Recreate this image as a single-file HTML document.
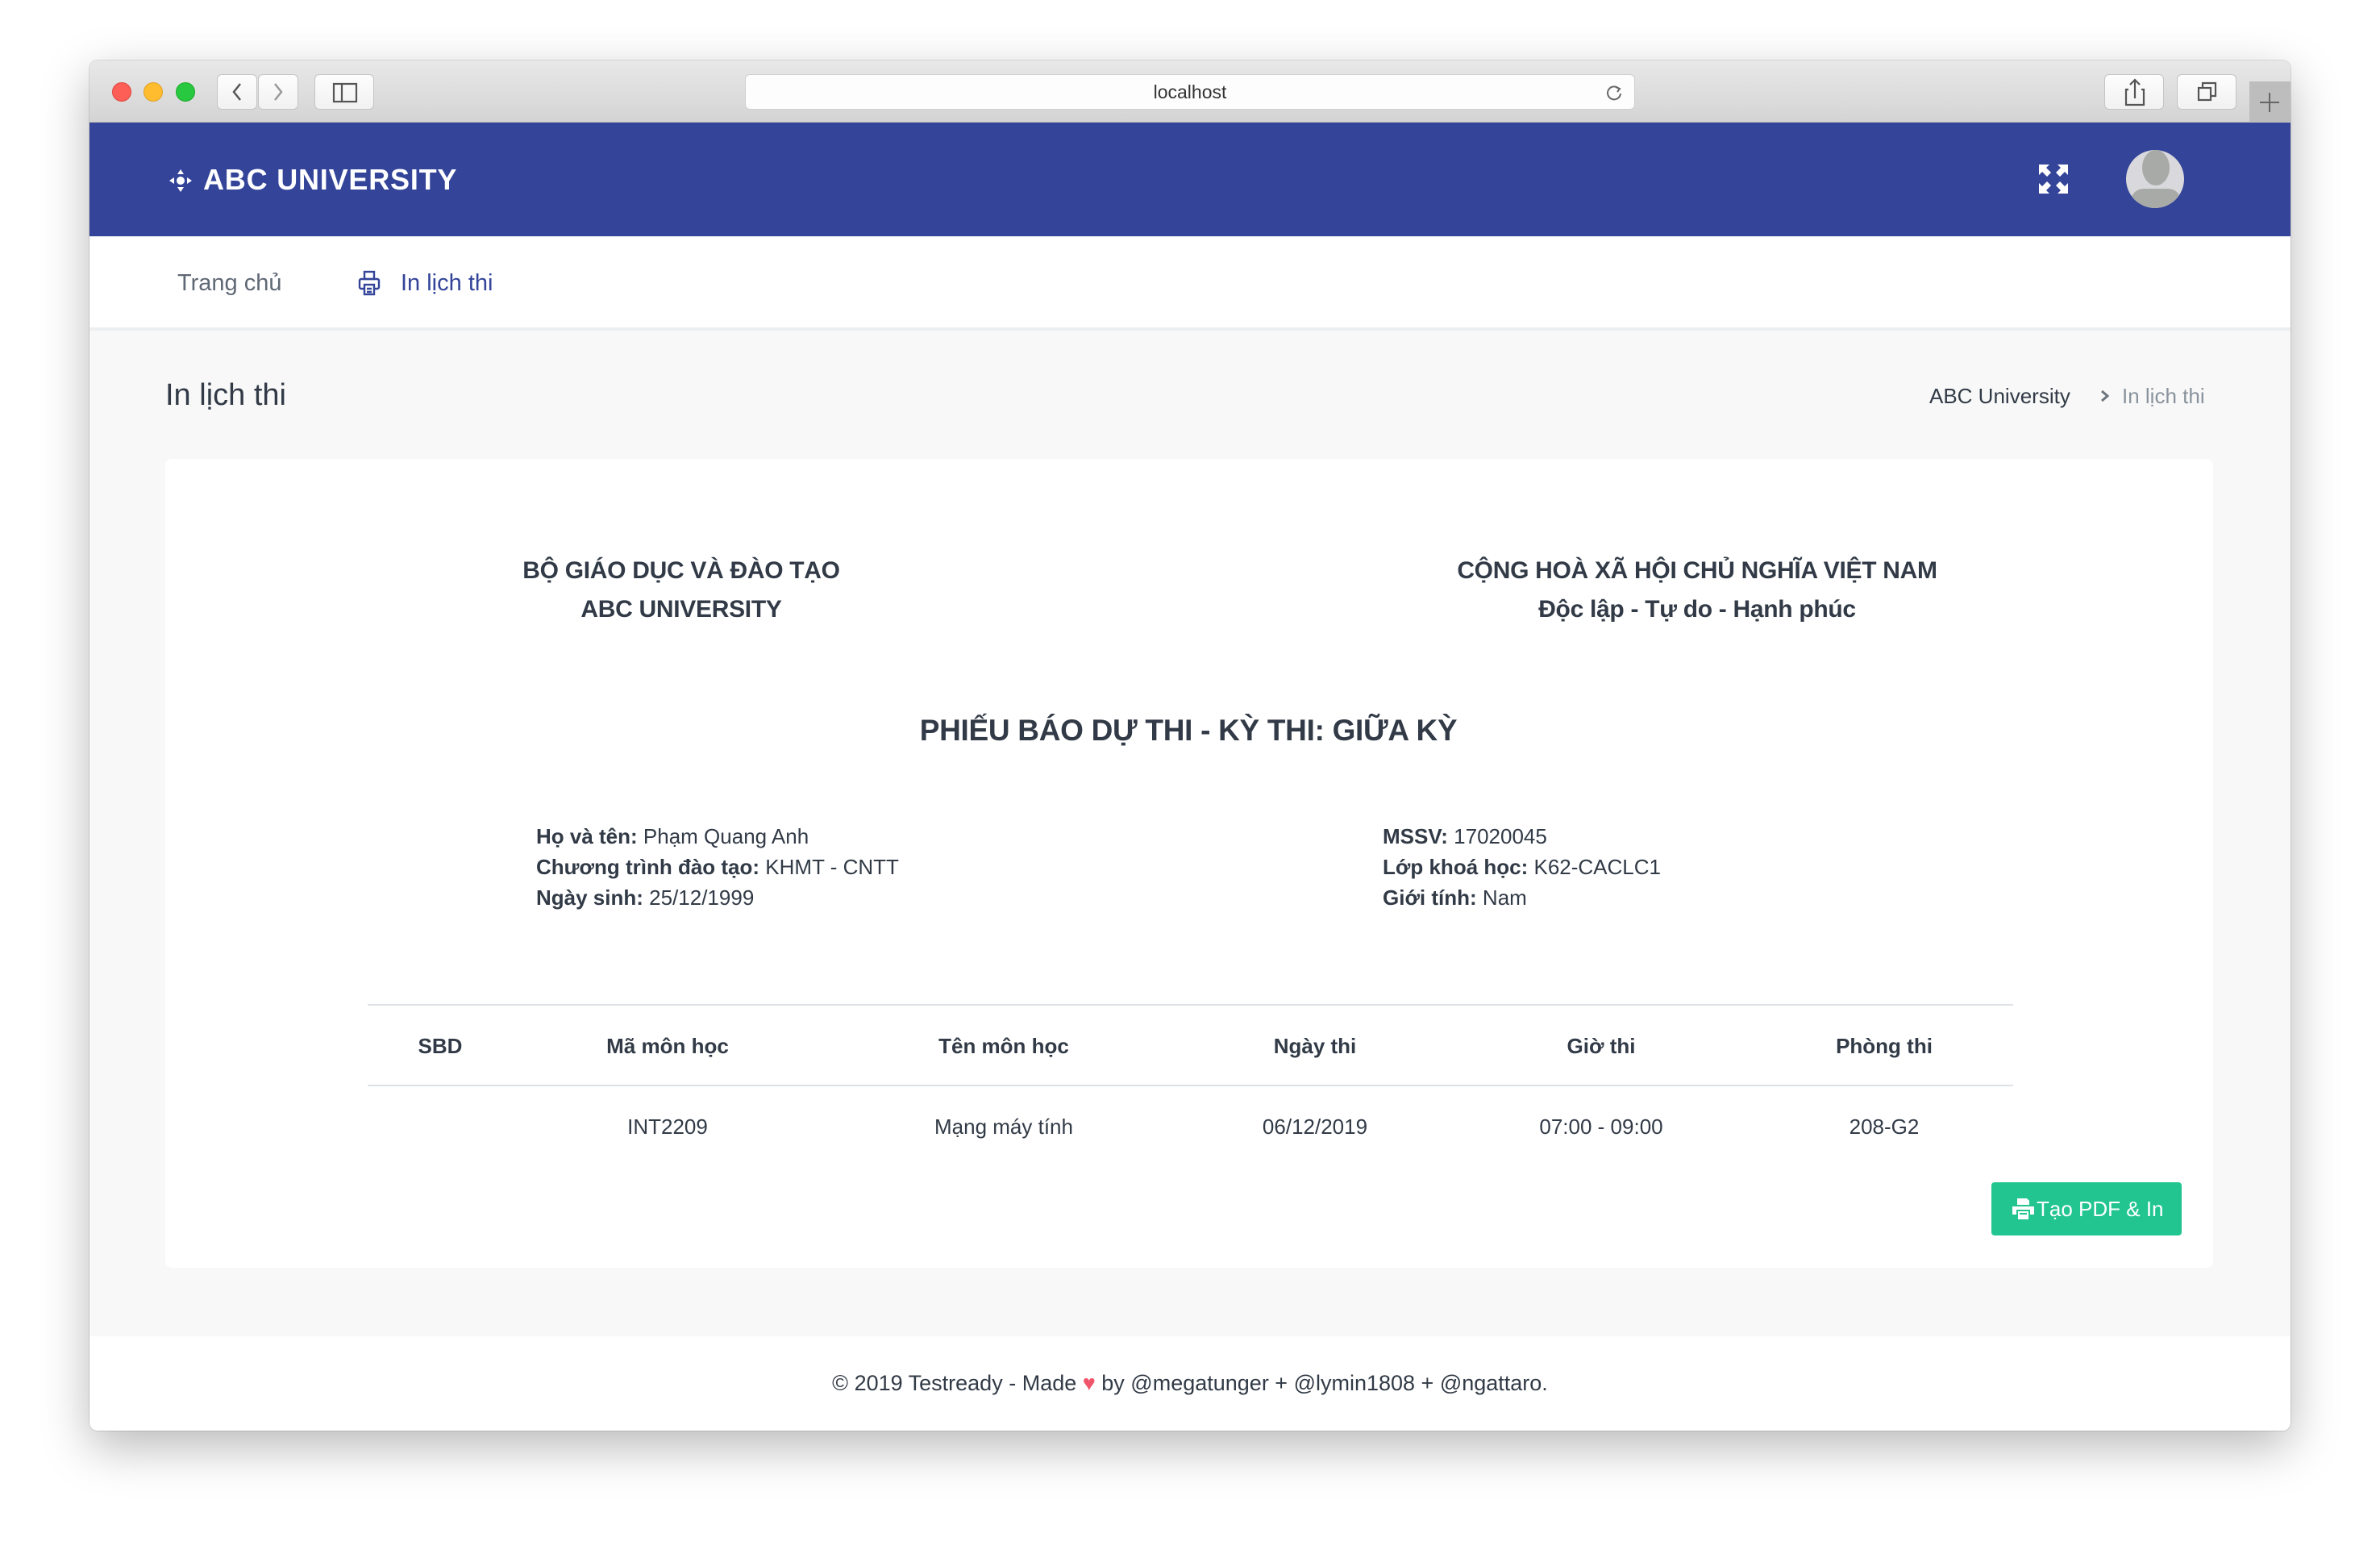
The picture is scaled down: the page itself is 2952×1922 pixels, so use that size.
<!DOCTYPE html>
<html><head><meta charset="utf-8">
<style>
*{box-sizing:border-box;margin:0;padding:0}
body{width:2952px;height:1922px;background:#fff;font-family:"Liberation Sans",sans-serif;color:#313a46;position:relative;overflow:hidden}
.win{position:absolute;left:111px;top:75px;width:2730px;height:1699px;border-radius:10px;overflow:hidden;box-shadow:0 20px 60px rgba(0,0,0,.28),0 0 0 1px rgba(0,0,0,.12);background:#f8f8f8}
.tb{position:absolute;left:0;top:0;width:100%;height:77px;background:linear-gradient(#e8e8e8,#d4d4d4);border-bottom:1px solid #b8b8b8}
.dot{position:absolute;top:27px;width:24px;height:24px;border-radius:50%}
.btn{position:absolute;top:17px;height:44px;background:linear-gradient(#fdfdfd,#f1f1f1);border:1px solid #c4c4c4;border-radius:6px}
.url{position:absolute;left:813px;top:17px;width:1104px;height:44px;background:#fdfdfd;border:1px solid #cfcfcf;border-radius:6px;text-align:center;font-size:23px;line-height:42px;color:#333}
.hdr{position:absolute;left:0;top:77px;width:100%;height:141px;background:#334499}
.nav{position:absolute;left:0;top:218px;width:100%;height:117px;background:#fff;border-bottom:4px solid #eceeef}
.t{position:absolute;white-space:nowrap}
.card{position:absolute;left:94px;top:494px;width:2540px;height:1003px;background:#fff;border-radius:8px}
.foot{position:absolute;left:0;top:1582px;width:100%;height:117px;background:#fff;text-align:center;font-size:27px;line-height:117px;color:#313a46}
.c{transform:translateX(-50%);text-align:center}
.hd{font-size:30px;font-weight:bold;letter-spacing:-0.3px}
.info{font-size:26px;line-height:38px}
.info b{font-weight:bold}
.th{font-size:26px;font-weight:bold;top:1207px}
.td{font-size:26px;top:1307px}
</style></head><body>
<div class="win">
 <div class="tb">
  <div class="dot" style="left:28px;background:#fd5f57;border:1px solid #e0443e"></div>
  <div class="dot" style="left:67px;background:#febc2e;border:1px solid #dea123"></div>
  <div class="dot" style="left:107px;background:#28c840;border:1px solid #1aab29"></div>
  <div class="btn" style="left:158px;width:50px"></div>
  <div class="btn" style="left:209px;width:50px"></div>
  <svg class="t" style="left:158px;top:17px" width="101" height="44"><path d="M29 12 L21 22 L29 32" stroke="#555" stroke-width="2.5" fill="none"/><path d="M72 12 L80 22 L72 32" stroke="#999" stroke-width="2.5" fill="none"/></svg>
  <div class="btn" style="left:279px;width:74px"><svg width="74" height="44"><rect x="23" y="11" width="28" height="22" fill="none" stroke="#555" stroke-width="2.2"/><line x1="33" y1="11" x2="33" y2="33" stroke="#555" stroke-width="2.2"/></svg></div>
  <div class="url">localhost<svg style="position:absolute;right:14px;top:11px" width="22" height="22"><path d="M17 6 A8 8 0 1 0 19 12" stroke="#666" stroke-width="2" fill="none"/><path d="M13 4 L18 6 L15 10" stroke="#666" stroke-width="2" fill="none"/></svg></div>
  <div class="btn" style="left:2499px;width:74px"><svg width="74" height="44"><path d="M29 18 H26 V37 H48 V18 H45" stroke="#555" stroke-width="2.2" fill="none"/><path d="M37 29 V6 M31 12 L37 6 L43 12" stroke="#555" stroke-width="2.2" fill="none"/></svg></div>
  <div class="btn" style="left:2589px;width:74px"><svg width="74" height="44"><rect x="26" y="16" width="15" height="15" fill="none" stroke="#555" stroke-width="2.2"/><path d="M31 16 V10 H47 V26 H41" stroke="#555" stroke-width="2.2" fill="none"/></svg></div>
  <div style="position:absolute;left:2679px;top:26px;width:51px;height:51px;background:#bdbdbd"><svg width="51" height="51"><path d="M25 14 V38 M13 26 H37" stroke="#666" stroke-width="2"/></svg></div>
 </div>
 <div class="hdr">
  <svg class="t" style="left:98px;top:57px" width="30" height="30" viewBox="0 0 30 30" fill="#fff"><path d="M15 1 L11 7 H19Z M15 29 L11 23 H19Z M1 15 L7 11 V19Z M29 15 L23 11 V19Z"/><circle cx="15" cy="15" r="5"/></svg>
  <div class="t" style="left:141px;top:50px;font-size:36px;font-weight:bold;color:#fff;letter-spacing:0.8px">ABC UNIVERSITY</div>
  <svg class="t" style="left:2418px;top:52px" width="36" height="36" viewBox="0 0 36 36" fill="#fff"><path d="M0 0 H13 L9 4 L15 10 L10 15 L4 9 L0 13Z M36 0 V13 L32 9 L26 15 L21 10 L27 4 L23 0Z M0 36 V23 L4 27 L10 21 L15 26 L9 32 L13 36Z M36 36 H23 L27 32 L21 26 L26 21 L32 27 L36 23Z"/></svg>
  <svg class="t" style="left:2526px;top:34px" width="72" height="72" viewBox="0 0 72 72"><defs><clipPath id="cc"><circle cx="36" cy="36" r="36"/></clipPath></defs><circle cx="36" cy="36" r="36" fill="#d9d8dc"/><g clip-path="url(#cc)" fill="#a8aaa7"><ellipse cx="37" cy="22" rx="17" ry="22"/><rect x="6" y="48" width="62" height="30" rx="16"/></g></svg>
 </div>
 <div class="nav">
  <div class="t" style="left:109px;top:42px;font-size:29px;color:#5f6875">Trang chủ</div>
  <svg class="t" style="left:333px;top:42px" width="28" height="32" viewBox="0 0 28 32" fill="none" stroke="#334499" stroke-width="2.4"><rect x="8" y="2" width="12" height="9"/><rect x="2" y="11" width="24" height="12" rx="2"/><rect x="8" y="18" width="12" height="12" fill="#fff"/><path d="M11 23 H17 M11 27 H17"/></svg>
  <div class="t" style="left:386px;top:42px;font-size:29px;color:#334499">In lịch thi</div>
 </div>
 <div class="t" style="left:94px;top:394px;font-size:38px;color:#313a46">In lịch thi</div>
 <div class="t" style="left:2282px;top:401px;font-size:26px;color:#313a46">ABC University</div>
 <svg class="t" style="left:2493px;top:407px" width="14" height="18"><path d="M3 3 L10 9 L3 15" stroke="#6c757d" stroke-width="3" fill="none"/></svg>
 <div class="t" style="left:2521px;top:401px;font-size:26px;color:#8a939d">In lịch thi</div>
 <div class="card"></div>
 <div class="t c hd" style="left:734px;top:616px">BỘ GIÁO DỤC VÀ ĐÀO TẠO</div>
 <div class="t c hd" style="left:734px;top:664px">ABC UNIVERSITY</div>
 <div class="t c hd" style="left:1994px;top:616px">CỘNG HOÀ XÃ HỘI CHỦ NGHĨA VIỆT NAM</div>
 <div class="t c hd" style="left:1994px;top:664px">Độc lập - Tự do - Hạnh phúc</div>
 <div class="t c" style="left:1363px;top:810px;font-size:37px;font-weight:bold;letter-spacing:-0.3px">PHIẾU BÁO DỰ THI - KỲ THI: GIỮA KỲ</div>
 <div class="t info" style="left:554px;top:943px"><b>Họ và tên:</b> Phạm Quang Anh<br><b>Chương trình đào tạo:</b> KHMT - CNTT<br><b>Ngày sinh:</b> 25/12/1999</div>
 <div class="t info" style="left:1604px;top:943px"><b>MSSV:</b> 17020045<br><b>Lớp khoá học:</b> K62-CACLC1<br><b>Giới tính:</b> Nam</div>
 <div class="t" style="left:345px;top:1170px;width:2041px;height:2px;background:#dee2e6"></div>
 <div class="t" style="left:345px;top:1270px;width:2041px;height:2px;background:#dee2e6"></div>
 <div class="t c th" style="left:435px">SBD</div>
 <div class="t c th" style="left:717px">Mã môn học</div>
 <div class="t c th" style="left:1134px">Tên môn học</div>
 <div class="t c th" style="left:1520px">Ngày thi</div>
 <div class="t c th" style="left:1875px">Giờ thi</div>
 <div class="t c th" style="left:2226px">Phòng thi</div>
 <div class="t c td" style="left:717px">INT2209</div>
 <div class="t c td" style="left:1134px">Mạng máy tính</div>
 <div class="t c td" style="left:1520px">06/12/2019</div>
 <div class="t c td" style="left:1875px">07:00 - 09:00</div>
 <div class="t c td" style="left:2226px">208-G2</div>
 <div class="t" style="left:2359px;top:1391px;width:236px;height:66px;background:#22c590;border-radius:4px;color:#fff;font-size:26px;line-height:66px;padding-left:56px">Tạo PDF &amp; In
  <svg style="position:absolute;left:26px;top:20px" width="27" height="26" viewBox="0 0 27 26" fill="#fff"><path d="M6 0 H18 L21 3 V8 H6Z M0 10 H27 V20 H22 V14 H5 V20 H0Z"/><rect x="7" y="16" width="13" height="10"/><rect x="9" y="18" width="9" height="2" fill="#22c590"/></svg></div>
 <div class="foot">© 2019 Testready - Made <span style="color:#f1556c">♥</span> by @megatunger + @lymin1808 + @ngattaro.</div>
</div>
</body></html>
